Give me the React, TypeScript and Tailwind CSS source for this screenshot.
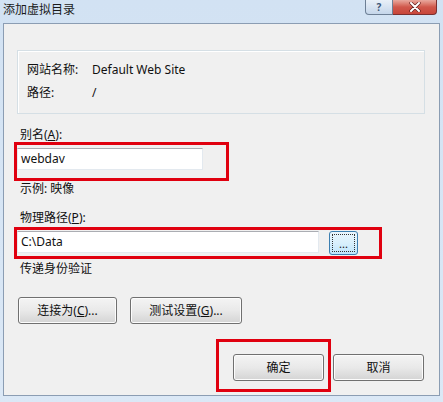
import React from "react";

const font = { fontFamily: '"Noto Sans", "Noto Sans CJK SC", sans-serif' };

function Btn({ children, className = "" }: { children: React.ReactNode; className?: string }) {
  return (
    <div
      className={
        "flex items-center justify-center rounded-[3px] border border-[#707070] bg-gradient-to-b from-[#f4f4f4] via-[#e9e9e9] to-[#d4d4d4] text-[12px] text-[#111] shadow-[inset_0_0_0_1px_#fcfcfc] " +
        className
      }
    >
      {children}
    </div>
  );
}

export default function App() {
  return (
    <div
      className="relative flex h-[402px] w-[443px] flex-col overflow-hidden bg-gradient-to-b from-[#d2e2f3] to-[#dbe8f6]"
      style={font}
    >
      {/* title bar */}
      <div className="relative flex h-[23px] shrink-0 items-start">
        <div className="ml-[3px] mt-[2px] text-[12px] leading-[16px] text-[#1a1a1a]">添加虚拟目录</div>
        <div className="absolute right-[6px] top-0 flex h-[15px]">
          <div className="flex w-[28px] items-center justify-center rounded-bl-[4px] border border-t-0 border-[#6d7f95] bg-gradient-to-b from-[#e9f0f8] to-[#c5d6ea] text-[10px] font-bold leading-none text-[#3d5577]">
            ?
          </div>
          <div className="flex w-[44px] items-center justify-center rounded-br-[4px] border border-l-0 border-t-0 border-[#7a2f2f] bg-gradient-to-b from-[#e8a89e] via-[#d0574b] to-[#c8463a]">
            <svg width="12" height="10" viewBox="0 0 12 10">
              <path d="M2 1 L10 9 M10 1 L2 9" stroke="#5a1a1a" strokeWidth="3.2" strokeLinecap="round" />
              <path d="M2 1 L10 9 M10 1 L2 9" stroke="#ffffff" strokeWidth="2" strokeLinecap="round" />
            </svg>
          </div>
        </div>
      </div>

      {/* content */}
      <div className="ml-[3px] mr-[3px] flex h-[373px] flex-col border border-[#8b9db3] bg-[#f0f0f0] text-[12px] leading-[16px] text-[#111]">
        {/* group box */}
        <div className="ml-[13px] mt-[26px] h-[64px] w-[408px] border border-[#d5dfe5] shadow-[inset_1px_1px_0_#ffffff] pl-[9px] pt-[11px]">
          <div className="flex">
            <div className="w-[65px]">网站名称:</div>
            <div>Default Web Site</div>
          </div>
          <div className="mt-[7px] flex">
            <div className="w-[65px]">路径:</div>
            <div>/</div>
          </div>
        </div>

        <div className="ml-[16px] mt-[13px]">
          别名(<span className="underline">A</span>):
        </div>
        <div className="ml-[13px] mt-[5px] flex h-[22px] w-[186px] items-center border border-[#e3e9ef] border-t-[#abadb3] bg-white pl-[3px]">
          webdav
        </div>

        <div className="ml-[16px] mt-[11px]">示例: 映像</div>

        <div className="ml-[16px] mt-[13px]">
          物理路径(<span className="underline">P</span>):
        </div>
        <div className="ml-[13px] mt-[5px] flex items-start">
          <div className="flex h-[22px] w-[302px] items-center border border-[#e3e9ef] border-t-[#abadb3] bg-white pl-[3px]">
            C:\Data
          </div>
          <div className="ml-[10px] flex h-[24px] w-[29px] items-center justify-center rounded-[3px] border border-[#3c7fb1] bg-gradient-to-b from-[#eaf6fd] via-[#d9f0fc] to-[#bee6fd] p-[2px]">
            <div className="flex h-full w-full items-center justify-center border border-dotted border-[#333] text-[11px] leading-none">
              ...
            </div>
          </div>
        </div>

        <div className="ml-[16px] mt-[6px]">传递身份验证</div>

        <div className="ml-[14px] mt-[20px] flex gap-[13px]">
          <Btn className="h-[27px] w-[99px]">
            连接为(<span className="underline">C</span>)...
          </Btn>
          <Btn className="h-[27px] w-[112px]">
            测试设置(<span className="underline">G</span>)...
          </Btn>
        </div>

        <div className="mr-[15px] mt-[30px] flex justify-end gap-[9px]">
          <Btn className="h-[27px] w-[91px]">确定</Btn>
          <Btn className="h-[27px] w-[91px]">取消</Btn>
        </div>
      </div>

      {/* red annotation boxes */}
      <div className="absolute left-[14px] top-[142px] h-[39px] w-[215px] border-[3px] border-[#e0000f]" />
      <div className="absolute left-[14px] top-[227px] h-[32px] w-[368px] border-[3px] border-[#e0000f]" />
      <div className="absolute left-[216px] top-[339px] h-[53px] w-[115px] border-[3px] border-[#e0000f]" />
    </div>
  );
}
